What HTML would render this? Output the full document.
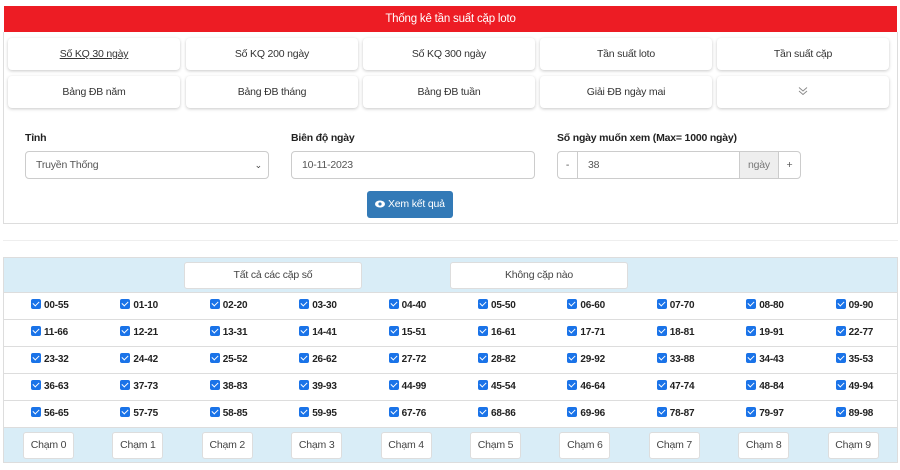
<!DOCTYPE html>
<html><head><meta charset="utf-8"><style>
*{box-sizing:border-box;margin:0;padding:0}
body{width:900px;height:470px;background:#fff;font-family:"Liberation Sans",sans-serif;font-size:11px;color:#333;position:relative;overflow:hidden;letter-spacing:-0.2px}
.abs{position:absolute}
.red{left:4px;top:6px;width:893px;height:26px;background:#ed1c24;color:#fff;text-align:center;line-height:26px;font-size:11.5px}
.box{left:3px;top:32px;width:895px;height:192px;border:1px solid #ddd;border-top:none}
.b{position:absolute;height:32px;width:172px;background:#fff;border-radius:4px;box-shadow:0 1px 3px rgba(0,0,0,.22);text-align:center;line-height:32px;font-size:10.5px;color:#333}
.lbl{font-weight:bold;font-size:10.5px;color:#222}
.inp{height:28px;border:1px solid #ccc;border-radius:4px;line-height:26px;padding-left:10px;color:#555;background:#fff;font-size:10.5px}
.btn{left:367px;top:191px;width:86px;height:27px;background:#337ab7;border-radius:3px;color:#fff;line-height:27px;text-align:center;font-size:10.5px}
.hr{left:3px;top:240px;width:895px;height:1px;background:#eee}
.tb{left:3px;top:257px;width:895px;height:206px;border:1px solid #ddd}
.band{background:#d9edf7;left:4px;width:893px}
.wb{position:absolute;background:#fff;border:1px solid #ddd;border-radius:3px;text-align:center;color:#444;font-size:10.5px}
.row{left:4px;width:893px;height:27px;border-top:1px solid #ddd}
.cell{position:absolute;top:0;height:27px;line-height:26px;font-weight:bold;font-size:10px;color:#222}
.cb{display:inline-block;width:10px;height:10px;background:#1a73e8;border-radius:2px;vertical-align:-1px;margin-right:3px;position:relative}
.cb:after{content:"";position:absolute;left:3px;top:1px;width:3px;height:5px;border:solid #fff;border-width:0 1.5px 1.5px 0;transform:rotate(45deg)}
</style></head><body>
<div class="abs red">Thống kê tần suất cặp loto</div>
<div class="abs box"></div>
<div class="b" style="left:8px;top:38px;text-decoration:underline">Số KQ 30 ngày</div>
<div class="b" style="left:186px;top:38px">Số KQ 200 ngày</div>
<div class="b" style="left:363px;top:38px">Số KQ 300 ngày</div>
<div class="b" style="left:540px;top:38px">Tần suất loto</div>
<div class="b" style="left:717px;top:38px">Tần suất cặp</div>
<div class="b" style="left:8px;top:76px">Bảng ĐB năm</div>
<div class="b" style="left:186px;top:76px">Bảng ĐB tháng</div>
<div class="b" style="left:363px;top:76px">Bảng ĐB tuần</div>
<div class="b" style="left:540px;top:76px">Giải ĐB ngày mai</div>
<div class="b" style="left:717px;top:76px;color:#777">
<svg width="10" height="10" viewBox="0 0 10 10" style="vertical-align:-1px"><path d="M1 1.5L5 5L9 1.5M1 5L5 8.5L9 5" fill="none" stroke="#888" stroke-width="0.9"/></svg></div>
<div class="abs lbl" style="left:25px;top:132px">Tỉnh</div>
<div class="abs lbl" style="left:291px;top:132px">Biên độ ngày</div>
<div class="abs lbl" style="left:557px;top:132px">Số ngày muốn xem (Max= 1000 ngày)</div>
<div class="abs inp" style="left:25px;top:151px;width:244px">Truyền Thống<span style="position:absolute;right:6px;top:0;font-size:9px;color:#444">&#8964;</span></div>
<div class="abs inp" style="left:291px;top:151px;width:244px">10-11-2023</div>
<div class="abs inp" style="left:557px;top:151px;width:244px;padding:0">
<span style="position:absolute;left:0;width:20px;text-align:center;border-right:1px solid #ccc;height:26px">-</span>
<span style="position:absolute;left:30px">38</span>
<span style="position:absolute;left:181px;width:40px;height:26px;background:#eee;text-align:center;border-left:1px solid #ccc;border-right:1px solid #ccc;color:#777">ngày</span>
<span style="position:absolute;left:221px;width:21px;text-align:center">+</span></div>
<div class="abs btn"><svg width="10" height="8" viewBox="0 0 10 8" style="vertical-align:-1px"><ellipse cx="5" cy="4" rx="5" ry="3.5" fill="#fff"/><circle cx="5" cy="4" r="1.6" fill="#337ab7"/></svg> Xem kết quả</div>
<div class="abs hr"></div>
<div class="abs tb"></div>
<div class="abs band" style="top:258px;height:34px"></div>
<div class="wb" style="left:184px;top:262px;width:178px;height:27px;line-height:25px">Tất cả các cặp số</div>
<div class="wb" style="left:450px;top:262px;width:178px;height:27px;line-height:25px">Không cặp nào</div>
<div id="rows"></div>
<div class="abs band" style="top:427px;height:35px;border-top:1px solid #ddd"></div>
<div id="ch"></div>
<script>
var d=[["00-55","01-10","02-20","03-30","04-40","05-50","06-60","07-70","08-80","09-90"],
["11-66","12-21","13-31","14-41","15-51","16-61","17-71","18-81","19-91","22-77"],
["23-32","24-42","25-52","26-62","27-72","28-82","29-92","33-88","34-43","35-53"],
["36-63","37-73","38-83","39-93","44-99","45-54","46-64","47-74","48-84","49-94"],
["56-65","57-75","58-85","59-95","67-76","68-86","69-96","78-87","79-97","89-98"]];
var h="";
for(var r=0;r<5;r++){h+='<div class="abs row" style="top:'+(292+r*27)+'px">';
for(var c=0;c<10;c++)h+='<div class="cell" style="left:'+(27+c*89.4)+'px"><span class="cb"></span>'+d[r][c]+'</div>';
h+='</div>';}
document.getElementById("rows").innerHTML=h;
var g="";for(var c=0;c<10;c++)g+='<div class="wb" style="left:'+(23+c*89.4)+'px;top:432px;width:51px;height:27px;line-height:25px">Chạm '+c+'</div>';
document.getElementById("ch").innerHTML=g;
</script>
</body></html>
